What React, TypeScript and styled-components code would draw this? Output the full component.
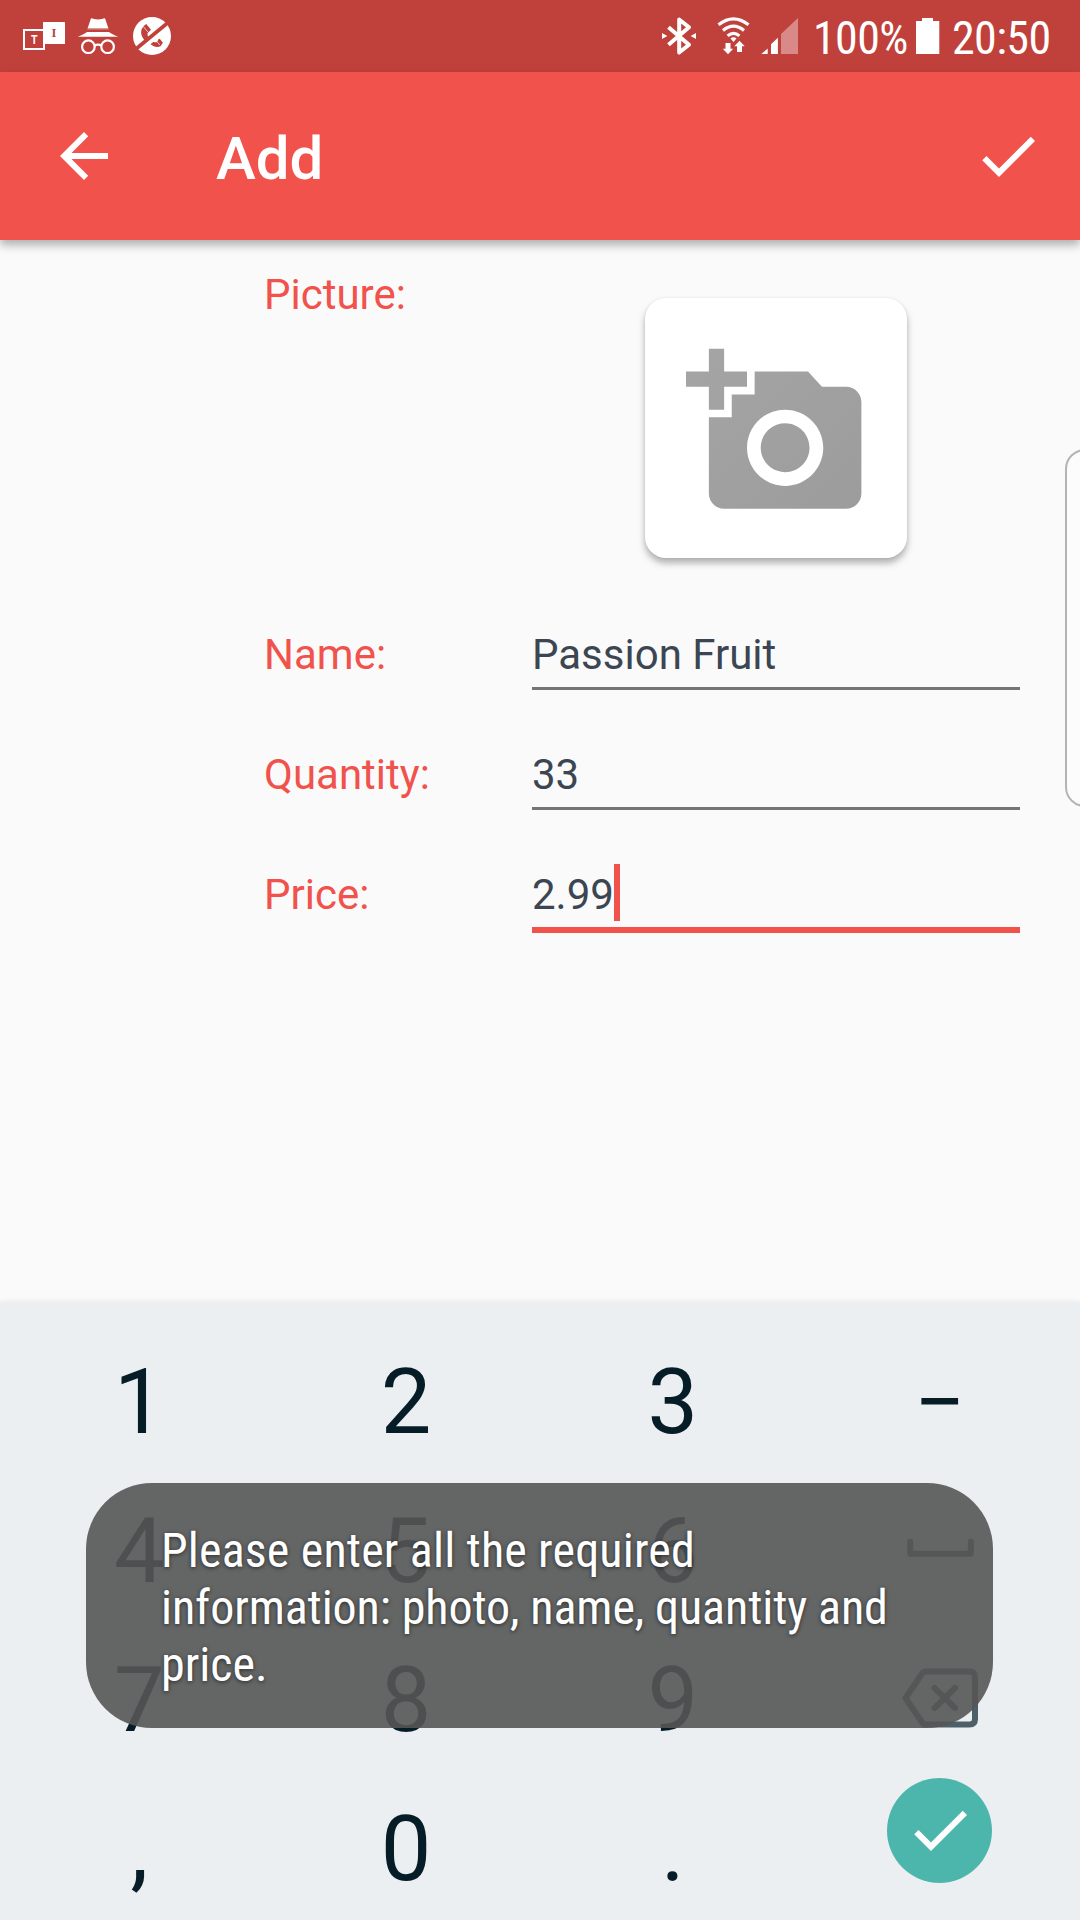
import React from "react";
import styled, { createGlobalStyle } from "styled-components";

const GlobalStyle = createGlobalStyle`
  * { box-sizing: border-box; }
  body { margin: 0; background: #fafafa; }
`;

const Screen = styled.div`
  position: relative;
  width: 1080px;
  height: 1920px;
  overflow: hidden;
  display: flex;
  flex-direction: column;
  background: #fafafa;
  font-family: Roboto, "Noto Sans", sans-serif;
`;

const StatusBar = styled.div`
  flex: none;
  height: 72px;
  display: flex;
  align-items: center;
  justify-content: space-between;
  padding: 0 31px 0 23px;
  background: #c0413b;
`;

const StatusGroup = styled.div`
  display: flex;
  align-items: center;
  height: 72px;
`;

const Glyph = styled.svg<{ $gap?: number }>`
  display: block;
  flex: none;
  margin-left: ${(p) => p.$gap ?? 0}px;
`;

const StatusText = styled.span<{ $gap: number; $width: number }>`
  width: ${(p) => p.$width}px;
  margin-left: ${(p) => p.$gap}px;
  padding-top: 3px;
  white-space: nowrap;
  color: #fff;
  font: 400 46px/54px "Roboto Condensed", Roboto, sans-serif;
  font-stretch: 75%;
  letter-spacing: -0.6px;
`;

const AppBar = styled.header`
  flex: none;
  z-index: 1;
  height: 168px;
  display: flex;
  align-items: center;
  padding: 0 36px 0 48px;
  background: #f1524b;
  box-shadow: 0 5px 9px rgba(0, 0, 0, 0.3);
`;

const Title = styled.h1`
  flex: 1;
  margin: 5px 0 0 96px;
  color: #fff;
  font-weight: 500;
  font-size: 60px;
  line-height: 72px;
`;

const Form = styled.main`
  flex: 1;
  padding: 0 60px 0 264px;
`;

const PictureRow = styled.div`
  display: grid;
  grid-template-columns: 268px 488px;
  height: 355px;
`;

const FieldRow = styled.div`
  display: grid;
  grid-template-columns: 268px 488px;
  height: 120px;
`;

const Label = styled.label<{ $top: number }>`
  padding-top: ${(p) => p.$top}px;
  color: #f1524b;
  font-size: 42px;
  line-height: 50px;
`;

const PhotoCard = styled.button`
  justify-self: center;
  width: 262px;
  height: 260px;
  margin-top: 58px;
  padding: 9px 0 0 3px;
  display: flex;
  align-items: center;
  justify-content: center;
  border: 0;
  border-radius: 21px;
  background: #fff;
  box-shadow: 0 5px 7px rgba(0, 0, 0, 0.3), 0 0 3px rgba(0, 0, 0, 0.06);
`;

const Input = styled.div<{ $active?: boolean }>`
  display: flex;
  align-items: center;
  height: ${(p) => (p.$active ? 73 : 70)}px;
  margin-top: 25px;
  padding-top: 2px;
  border-bottom: ${(p) => (p.$active ? "6px solid #f1524b" : "3px solid #757575")};
  color: #3b4652;
  font-size: 42px;
  line-height: 50px;
`;

const Caret = styled.span`
  width: 6px;
  height: 57px;
  margin-bottom: 4px;
  background: #f1524b;
`;

const EdgeHandle = styled.div`
  position: absolute;
  top: 449px;
  left: 1065px;
  width: 40px;
  height: 358px;
  border: 2px solid #b4b4b4;
  border-radius: 20px;
  background: #fcfcfc;
`;

const Keyboard = styled.div`
  flex: none;
  height: 617px;
  padding: 25px 7px 0 6px;
  display: grid;
  grid-template-columns: repeat(4, 1fr);
  grid-template-rows: repeat(4, 149px);
  background: #ebeff2;
  box-shadow: 0 -1px 6px rgba(40, 20, 0, 0.09);
`;

const Key = styled.div<{ $lift?: number }>`
  display: flex;
  align-items: center;
  justify-content: center;
  padding-bottom: ${(p) => p.$lift ?? 0}px;
  color: #061c26;
  font-size: 90px;
  line-height: 106px;
`;

const EnterButton = styled.div`
  display: flex;
  align-items: center;
  justify-content: center;
  width: 105px;
  height: 105px;
  border-radius: 50%;
  background: #4db6ac;
`;

const Toast = styled.div`
  position: absolute;
  top: 1483px;
  left: 86px;
  width: 907px;
  height: 245px;
  padding: 39px 75px;
  border-radius: 66px;
  background: rgba(85, 85, 85, 0.9);
  color: #fff;
  font: 400 48px/57px "Roboto Condensed", Roboto, sans-serif;
  font-stretch: 75%;
  text-shadow: 0 1px 4px rgba(0, 0, 0, 0.6);
`;

const ToastLine = styled.div<{ $spacing?: number }>`
  white-space: nowrap;
  letter-spacing: ${(p) => p.$spacing ?? 0}px;
`;

const CheckIcon = ({ size }: { size: number }) => (
  <Glyph width={size} height={size} viewBox="0 0 24 24" fill="#fff">
    <path d="M9 16.17L4.83 12l-1.42 1.41L9 19 21 7l-1.41-1.41z" />
  </Glyph>
);

const BackIcon = () => (
  <Glyph width="72" height="72" viewBox="0 0 24 24" fill="#fff">
    <path d="M20 11H7.83l5.59-5.59L12 4l-8 8 8 8 1.41-1.41L7.83 13H20v-2z" />
  </Glyph>
);

const AddPhotoIcon = () => (
  <Glyph width="183" height="183" viewBox="0 0 24 24">
    <defs>
      <linearGradient id="photo" x1="0" y1="0" x2="1" y2="1">
        <stop offset="0" stopColor="#a5a5a5" />
        <stop offset="1" stopColor="#9c9c9c" />
      </linearGradient>
    </defs>
    <path
      fill="url(#photo)"
      d="M3 4V1h2v3h3v2H5v3H3V6H0V4h3zm3 6V7h3V4h7l1.83 2H21c1.1 0 2 .9 2 2v12c0 1.1-.9 2-2 2H5c-1.1 0-2-.9-2-2V10h3zm7 9c2.76 0 5-2.24 5-5s-2.24-5-5-5-5 2.24-5 5 2.24 5 5 5zm-3.2-5c0 1.77 1.43 3.2 3.2 3.2s3.2-1.43 3.2-3.2-1.43-3.2-3.2-3.2-3.2 1.43-3.2 3.2z"
    />
  </Glyph>
);

const TranslateIcon = () => (
  <Glyph width="42" height="72" viewBox="23 0 42 72">
    <rect x="24" y="30" width="20" height="19" fill="none" stroke="#fff" strokeWidth="2" />
    <rect x="43" y="22" width="22" height="22" rx="0.6" fill="#fff" />
    <text x="34.200" y="44" textAnchor="middle" fill="#fff" fontFamily="Roboto" fontWeight="700" fontSize="12" textLength="6.500" lengthAdjust="spacingAndGlyphs">T</text>
    <text x="54" y="37" textAnchor="middle" fill="#c0413b" fontFamily="Liberation Serif" fontWeight="700" fontSize="12.500">I</text>
  </Glyph>
);

const IncognitoIcon = () => (
  <Glyph $gap={12} width="42" height="72" viewBox="77 0 42 72">
    <path fill="#fff" d="M91 18.2c2 0 4 1.3 7 1.3s5-1.3 7-1.3L108.3 28H87.7z" />
    <path fill="#fff" opacity=".45" d="M87.700 28h20.600l.4 1.400H87.300z" />
    <path fill="#fff" d="M87 32h22c2 1.800 6 3.200 9.300 4.800H77.700C81 35.200 85 33.800 87 32z" />
    <g fill="none" stroke="#fff" strokeWidth="2.200">
      <circle cx="88.400" cy="46.700" r="6.300" />
      <circle cx="107.600" cy="46.700" r="6.300" />
      <path d="M94.500 45.600q3.500-1.800 7 0" />
    </g>
  </Glyph>
);

const NoCallIcon = () => (
  <Glyph $gap={14} width="38" height="72" viewBox="133 0 38 72">
    <circle cx="152" cy="36" r="19" fill="#fff" />
    <path
      fill="#c0413b"
      d="M142 28.500l2-2.800 2.300-1.700 4.700 5.800-3.300 3.200c-.6 1.800.2 3.600 1.500 5.200l-3.700 3c-3.800-3.700-5.600-8.700-3.500-12.700zM150.500 44.200l3-2.400c1.200.6 2.400.7 3.700.2l1-2.500 1.500-.7 3.200 4-2.400 3.500c-3.700 1.500-7.200.2-10-2.100z"
    />
    <path stroke="#c0413b" strokeWidth="3.600" d="M136.500 48.500L167.500 23" />
    <path stroke="#fff" strokeWidth=".7" d="M143.500 26.800l4.500 5.300M157 41.500l2.800 3.500" />
  </Glyph>
);

const BluetoothIcon = () => (
  <Glyph width="34" height="72" viewBox="662 0 34 72">
    <path
      d="M668.500 27.200L689 44.800l-9.800 7.700V19.500l9.800 7.700-20.500 17.600"
      fill="none"
      stroke="#fff"
      strokeWidth="4"
      strokeLinejoin="round"
    />
    <path fill="#fff" d="M662 33l5.300 3-5.300 3zM696 33l-5.300 3 5.300 3z" />
  </Glyph>
);

const WifiIcon = () => (
  <Glyph $gap={21} width="33" height="72" viewBox="717 0 33 72">
    <g fill="none" stroke="#fff" strokeWidth="3.200">
      <path d="M718.500 24.800q15-12 30 0" />
      <path d="M723 30.400q10.500-8.500 21 0" />
      <path d="M727.600 35.900q5.900-5 11.800 0" />
    </g>
    <path fill="#fff" d="M730.500 38.400q3-2.200 6 0l-3 3.600z" />
    <path fill="#fff" d="M725.500 43h5v5.800h2.700l-5.200 5.500-5.200-5.500h2.700zM737 52v-5.800h-2.700l5.200-5.500 5.200 5.500H742V52z" />
  </Glyph>
);

const SignalIcon = () => (
  <Glyph $gap={11} width="37" height="72" viewBox="761 0 37 72">
    <path fill="#fff" d="M761.300 54l6.400-5.500V54zM771 54v-9.700l6.900-6.600V54z" />
    <path fill="#d98a88" d="M781 54V34l17-16v36z" />
  </Glyph>
);

const BatteryIcon = () => (
  <Glyph $gap={9} width="24" height="72" viewBox="916 0 24 72">
    <path fill="#fff" d="M922 18h11v3h6.300v33H916V21h6z" />
  </Glyph>
);

const SpaceIcon = () => (
  <Glyph $gap={2} width="67" height="18" viewBox="0 0 67 18">
    <path d="M3.200 2.500V14.700H63.800V2.500" fill="none" stroke="#4d5f69" strokeWidth="6" strokeLinecap="round" strokeLinejoin="round" />
  </Glyph>
);

const BackspaceIcon = () => (
  <Glyph width="76" height="60" viewBox="0 0 76 60">
    <g fill="none" stroke="#4d5f69" strokeWidth="6" strokeLinejoin="round" strokeLinecap="round">
      <path d="M23 3.500H67.500Q73 3.500 73 9V51Q73 56.500 67.500 56.500H23Q21.500 56.500 20.500 55L3.500 30L20.500 5Q21.500 3.500 23 3.500z" />
      <path d="M32.500 20L53 40M53 20L32.500 40" />
    </g>
  </Glyph>
);

const fields = [
  { label: "Name:", value: "Passion Fruit" },
  { label: "Quantity:", value: "33" },
  { label: "Price:", value: "2.99", active: true },
];

export default function App() {
  return (
    <>
      <GlobalStyle />
      <Screen>
        <StatusBar>
          <StatusGroup>
            <TranslateIcon />
            <IncognitoIcon />
            <NoCallIcon />
          </StatusGroup>
          <StatusGroup>
            <BluetoothIcon />
            <WifiIcon />
            <SignalIcon />
            <StatusText $gap={15} $width={94}>100%</StatusText>
            <BatteryIcon />
            <StatusText $gap={12} $width={97}>20:50</StatusText>
          </StatusGroup>
        </StatusBar>
        <AppBar>
          <BackIcon />
          <Title>Add</Title>
          <CheckIcon size={72} />
        </AppBar>
        <Form>
          <PictureRow>
            <Label $top={30}>Picture:</Label>
            <PhotoCard>
              <AddPhotoIcon />
            </PhotoCard>
          </PictureRow>
          {fields.map((f) => (
            <FieldRow key={f.label}>
              <Label $top={35}>{f.label}</Label>
              <Input $active={f.active}>
                {f.value}
                {f.active && <Caret />}
              </Input>
            </FieldRow>
          ))}
        </Form>
        <Keyboard>
          <Key>1</Key>
          <Key>2</Key>
          <Key>3</Key>
          <Key>−</Key>
          <Key>4</Key>
          <Key>5</Key>
          <Key>6</Key>
          <Key $lift={7}><SpaceIcon /></Key>
          <Key>7</Key>
          <Key>8</Key>
          <Key>9</Key>
          <Key $lift={5}><BackspaceIcon /></Key>
          <Key>,</Key>
          <Key>0</Key>
          <Key>.</Key>
          <Key $lift={39}>
            <EnterButton>
              <CheckIcon size={72} />
            </EnterButton>
          </Key>
        </Keyboard>
        <EdgeHandle />
        <Toast>
          <ToastLine $spacing={0.17}>Please enter all the required</ToastLine>
          <ToastLine $spacing={-0.1}>information: photo, name, quantity and</ToastLine>
          <ToastLine>price.</ToastLine>
        </Toast>
      </Screen>
    </>
  );
}
